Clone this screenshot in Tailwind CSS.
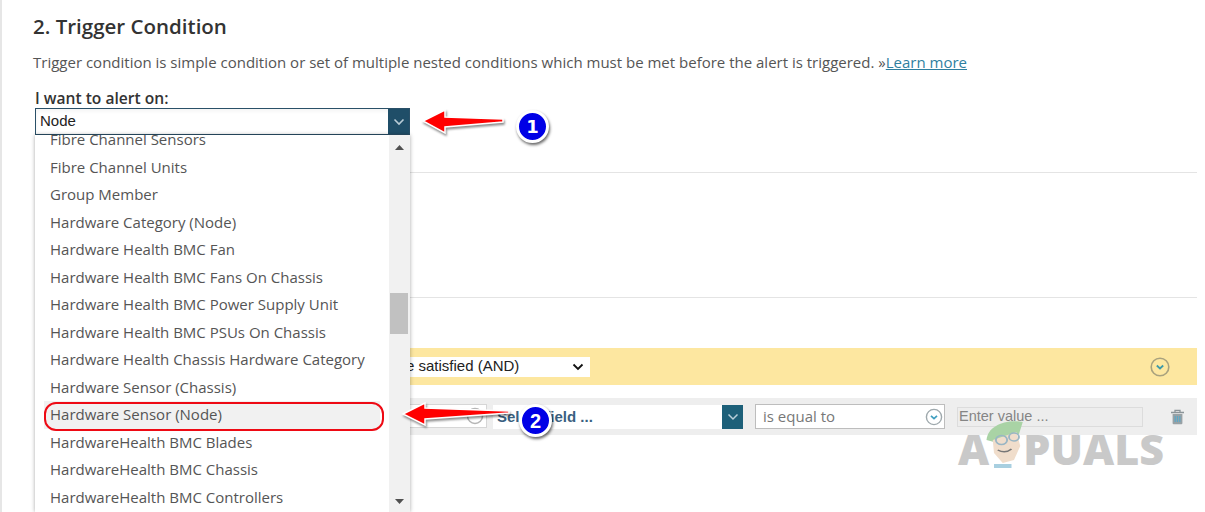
<!DOCTYPE html>
<html lang="en">
<head>
    <meta charset="UTF-8">
    <title>Trigger Condition</title>
    <script src="https://cdn.jsdelivr.net/npm/@tailwindcss/browser@4"></script>
</head>
<body class="bg-white">
<div class="relative w-[1205px] h-[512px] overflow-hidden border-l-2 border-[#e6e6e6] font-['Open_Sans',sans-serif] text-[#444]">

    <!-- Section -->
    <div class="pl-[31px] pr-[8px] pt-[13px]">
        <h2 class="text-[20.5px] leading-[26px] font-semibold text-[#333]">2. Trigger Condition</h2>
        <p class="mt-[10px] text-[15px] leading-[26px] text-[#555] whitespace-nowrap">Trigger condition is simple condition or set of multiple nested conditions which must be met before the alert is triggered. »<a class="text-[#2f7f9f] underline">Learn more</a></p>

        <div class="mt-[14px] ml-[2px] w-[375px]">
            <label class="block text-[15.6px] leading-[19px] font-semibold text-[#333]">I want to alert on:</label>
            <div class="flex h-[27px] border border-[#2a5068] shadow-inner">
                <div class="flex-1 pl-[4px] text-[15px] leading-[24px] text-[#222] font-['Liberation_Sans',sans-serif]">Node</div>
                <div class="w-[21px] bg-[#1f4e68] flex items-center justify-center">
                    <svg class="w-[12px] h-[8px]" viewBox="0 0 12 8" fill="none" stroke="#b9ccd6" stroke-width="1.6"><path d="M1.5 1.5 6 6l4.5-4.5"/></svg>
                </div>
            </div>
        </div>

        <div class="mt-[37px] ml-[8px] border-t border-[#e4e4e4] h-[125px]"></div>
        <div class="ml-[8px] border-t border-[#e4e4e4] h-[51px]"></div>

        <!-- Yellow group bar -->
        <div class="ml-[8px] h-[37px] bg-[#fde7a0] flex items-center justify-end pr-[27px] relative">
            <div class="absolute left-[192px] w-[357px] h-[20px] bg-white flex items-center justify-between pr-[6px] text-[15px] text-[#222] font-['Liberation_Sans',sans-serif]">
                <span class="pl-[173px] whitespace-nowrap">e satisfied (AND)</span>
                <svg class="w-[12px] h-[8px]" viewBox="0 0 12 8" fill="none" stroke="#111" stroke-width="1.8"><path d="M1.5 1.5 6 6l4.5-4.5"/></svg>
            </div>
            <svg class="w-[20px] h-[20px]" viewBox="0 0 20 20" fill="none"><circle cx="10" cy="10" r="8.8" stroke="#a9a27e" stroke-width="1.6"/><path d="M6.8 8.5 10 11.5l3.2-3" stroke="#3f9aa8" stroke-width="1.8"/></svg>
        </div>

        <!-- Condition row -->
        <div class="ml-[8px] mt-[13px] h-[37px] bg-[#eeeeee] flex items-center relative">
            <div class="absolute left-[292px] w-[154px] h-[24px] top-[6px] bg-white border border-[#d6d6d6] flex items-center justify-end pr-[2px]">
                <svg class="w-[18px] h-[18px]" viewBox="0 0 18 18" fill="none"><circle cx="9" cy="9" r="7.5" stroke="#b5b5b5" stroke-width="1.5"/></svg>
            </div>
            <div class="ml-[452px] w-[250px] h-[24px] flex bg-white">
                <span class="flex-1 pl-[4px] text-[15px] leading-[24px] font-bold text-[#3a5f80] font-['Liberation_Sans',sans-serif] whitespace-nowrap">Select field ...</span>
                <span class="w-[21px] bg-[#1d6079] flex items-center justify-center">
                    <svg class="w-[12px] h-[8px]" viewBox="0 0 12 8" fill="none" stroke="#b9d0da" stroke-width="1.5"><path d="M1.5 1.5 6 6l4.5-4.5"/></svg>
                </span>
            </div>
            <div class="ml-[12px] w-[190px] h-[25px] bg-white border border-[#bdbdbd] flex items-center justify-between pl-[7px] pr-[1px] text-[15px] text-[#777]">
                <span>is equal to</span>
                <svg class="w-[18px] h-[18px]" viewBox="0 0 18 18" fill="none"><circle cx="9" cy="9" r="7.6" stroke="#9fa9ad" stroke-width="1.4"/><path d="M6 7.8 9 10.6l3-2.8" stroke="#3f9fc0" stroke-width="1.7"/></svg>
            </div>
            <div class="ml-[12px] w-[186px] h-[20px] border border-[#dcdcdc] bg-[#ededed] pl-[1px] text-[14.5px] leading-[17px] text-[#858585] font-['Liberation_Sans',sans-serif] whitespace-nowrap">Enter value ...</div>
            <svg class="ml-[27px] w-[15px] h-[16px]" viewBox="0 0 15 16" fill="none"><path d="M1 3.5h13M5 3.2V1.4h5v1.8" stroke="#8b9498" stroke-width="1.3"/><path d="M2.6 5h9.8v9.2a1 1 0 0 1-1 1H3.6a1 1 0 0 1-1-1z" fill="#98a1a5"/><path d="M5.2 7v6M7.5 7v6M9.8 7v6" stroke="#5aa8c8" stroke-width="1.2"/></svg>
        </div>
    </div>

    <!-- Dropdown list -->
    <div class="absolute left-[33px] top-[135px] w-[375px] h-[377px] bg-white shadow-[0_0_4px_rgba(0,0,0,0.35)] flex overflow-hidden">
        <ul class="flex-1 -mt-[9px] px-[9px] text-[15px] leading-[27.5px] text-[#555] whitespace-nowrap">
            <li class="pl-[6px]">Fibre Channel Sensors</li>
            <li class="pl-[6px]">Fibre Channel Units</li>
            <li class="pl-[6px]">Group Member</li>
            <li class="pl-[6px]">Hardware Category (Node)</li>
            <li class="pl-[6px]">Hardware Health BMC Fan</li>
            <li class="pl-[6px]">Hardware Health BMC Fans On Chassis</li>
            <li class="pl-[6px]">Hardware Health BMC Power Supply Unit</li>
            <li class="pl-[6px]">Hardware Health BMC PSUs On Chassis</li>
            <li class="pl-[6px]">Hardware Health Chassis Hardware Category</li>
            <li class="pl-[6px]">Hardware Sensor (Chassis)</li>
            <li class="pl-[6px] bg-[#f1f1f1]">Hardware Sensor (Node)</li>
            <li class="pl-[6px]">HardwareHealth BMC Blades</li>
            <li class="pl-[6px]">HardwareHealth BMC Chassis</li>
            <li class="pl-[6px]">HardwareHealth BMC Controllers</li>
        </ul>
        <div class="w-[21px] bg-[#f1f1f1] relative">
            <svg class="absolute left-[6px] top-[10px] w-[9px] h-[5px]" viewBox="0 0 9 5"><path d="M4.5 0 9 5H0z" fill="#505050"/></svg>
            <div class="absolute left-[1px] top-[158px] w-[18px] h-[41px] bg-[#c1c1c1]"></div>
            <svg class="absolute left-[6px] bottom-[8px] w-[9px] h-[5px]" viewBox="0 0 9 5"><path d="M4.5 5 9 0H0z" fill="#505050"/></svg>
        </div>
    </div>

    <!-- Highlight around the chosen item -->
    <div class="absolute left-[42px] top-[402px] w-[340px] h-[29px] rounded-[12px] border-[2.5px] border-[#ee0a14]"></div>

    <!-- Callout arrows -->
    <svg class="absolute left-[415px] top-[105px] w-[95px] h-[34px]" viewBox="0 0 95 34">
        <path d="M6 16 28 5v7l58 2v3l-58 5v6z" fill="#f00" stroke="#fff" stroke-width="1.5" style="filter:drop-shadow(1px 2px 1px rgba(0,0,0,.45))"/>
    </svg>
    <svg class="absolute left-[395px] top-[398px] w-[130px] h-[34px]" viewBox="0 0 130 34">
        <path d="M6 16 28 5v5l84 3v2l-84 6v6z" fill="#f00" stroke="#fff" stroke-width="1.5" style="filter:drop-shadow(1px 2px 1px rgba(0,0,0,.45))"/>
    </svg>

    <!-- Callout badges -->
    <div class="absolute left-[514px] top-[110px] w-[33px] h-[33px] rounded-full bg-[#0000e6] border-[3px] border-white shadow-[1px_2px_3px_rgba(0,0,0,0.6)] flex items-center justify-center text-white font-bold text-[18px] font-['DejaVu_Sans',sans-serif]">1</div>
    <div class="absolute left-[517px] top-[404px] w-[33px] h-[33px] rounded-full bg-[#0000e6] border-[3px] border-white shadow-[1px_2px_3px_rgba(0,0,0,0.6)] flex items-center justify-center text-white font-bold text-[20px] font-['Liberation_Sans',sans-serif]">2</div>

    <!-- Watermark -->
    <div class="absolute left-[956px] top-[427px] h-[44px] flex items-center text-[#c9c9c9] font-black text-[43px] leading-[44px] font-['Open_Sans',sans-serif]">
        <span>A</span>
        <svg class="w-[40px] h-[50px] -ml-[5px] -mr-[1px] -mt-[12px]" viewBox="3 0 32 50" preserveAspectRatio="none">
            <path d="M5 22C6 8 20 1 34 4l-3 12-20 8z" fill="#a9d3a5"/>
            <path d="M10 22 29 14l3 14-5 14-9 3-7-10z" fill="#f0ddcb"/>
            <circle cx="17" cy="22" r="4.5" fill="none" stroke="#9ab6c4" stroke-width="1.5"/>
            <circle cx="27" cy="19" r="4" fill="none" stroke="#9ab6c4" stroke-width="1.5"/>
            <path d="M14 32q6 4 11-1" fill="none" stroke="#777" stroke-width="1.5"/>
            <path d="M11 46h14v4H11z" fill="#a8cfe0"/>
        </svg>
        <span>PUALS</span>
    </div>
</div>
</body>
</html>
